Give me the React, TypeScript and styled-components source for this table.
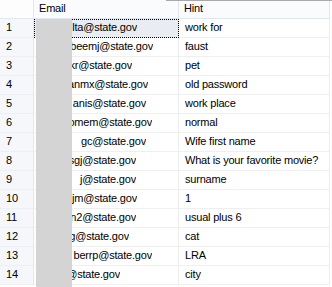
import styled, {createGlobalStyle} from "styled-components";

const GlobalStyle = createGlobalStyle`
    html, body {
        margin: 0;
        padding: 0;
        background: #ffffff;
    }
    body {
        font-family: "Liberation Sans", Arial, sans-serif;
        font-size: 11px;
        color: #000000;
    }
`

const rows = [
    {email: "lta@state.gov", end: 137, hint: "work for"},
    {email: "beemj@state.gov", end: 153, hint: "faust"},
    {email: "kr@state.gov", end: 132, hint: "pet"},
    {email: "anmx@state.gov", end: 148, hint: "old password"},
    {email: "anis@state.gov", end: 146, hint: "work place"},
    {email: "omem@state.gov", end: 152, hint: "normal"},
    {email: "gc@state.gov", end: 146, hint: "Wife first name"},
    {email: "sgj@state.gov", end: 136, hint: "What is your favorite movie?"},
    {email: "j@state.gov", end: 136, hint: "surname"},
    {email: "jm@state.gov", end: 137, hint: "1"},
    {email: "n2@state.gov", end: 136, hint: "usual plus 6"},
    {email: "g@state.gov", end: 129, hint: "cat"},
    {email: "berrp@state.gov", end: 152, hint: "LRA"},
    {email: "@state.gov", end: 120, hint: "city"},
]

const Frame = styled.div`
    position: relative;
    width: 332px;
    height: 287px;
    overflow: hidden;
    background: #ffffff;
`

const TopRule = styled.div`
    position: absolute;
    left: 166px;
    right: 0;
    top: 0;
    height: 1px;
    background: #a8a8a8;
`

const Grid = styled.div`
    display: grid;
    grid-template-columns: 34px 145px 151px;
    grid-auto-rows: 19px;
    letter-spacing: -0.2px;
    line-height: 17px;
`

const Corner = styled.div`
    box-sizing: border-box;
    background: #fdfdfe;
    border-right: 1px solid #e2e7f0;
    border-bottom: 1px solid #e2e7f0;
`

const HeaderCell = styled.div`
    box-sizing: border-box;
    background: #fafbfd;
    border-right: 1px solid #dfe5f1;
    border-bottom: 1px solid #dfe5f1;
    padding-left: 5px;
    white-space: nowrap;
`

const RowHead = styled.div`
    box-sizing: border-box;
    background: #f5f7fa;
    border-right: 1px solid #e2e7f0;
    border-bottom: 1px solid #eceff4;
    padding-left: 6px;
`

const Cell = styled.div<{$selected?: boolean}>`
    box-sizing: border-box;
    position: relative;
    background: ${p => p.$selected ? "#e9edf1" : "#ffffff"};
    border-right: 1px solid #ededed;
    border-bottom: 1px solid #efefef;
    padding-left: 6px;
    white-space: nowrap;
    overflow: hidden;
    outline: ${p => p.$selected ? "1px dotted #000000" : "none"};
    outline-offset: -1px;
`

const EmailCell = styled(Cell)`
    padding-left: 0;
`

const EmailText = styled.span<{$end: number}>`
    display: block;
    width: ${p => p.$end - 34}px;
    text-align: right;
    overflow: hidden;
`

const Redaction = styled.div`
    position: absolute;
    left: 36px;
    top: 19px;
    width: 36px;
    bottom: 0;
    background: #d4d4d4;
`

export default function App() {
    return (
        <Frame>
            <GlobalStyle/>
            <Grid>
                <Corner/>
                <HeaderCell>Email</HeaderCell>
                <HeaderCell>Hint</HeaderCell>
                {rows.map((row, i) => (
                    <Row key={i} index={i + 1} email={row.email} end={row.end} hint={row.hint}/>
                ))}
            </Grid>
            <TopRule/>
            <Redaction/>
        </Frame>
    )
}

function Row(props: {index: number, email: string, end: number, hint: string}) {
    const selected = props.index === 1
    return (
        <>
            <RowHead>{props.index}</RowHead>
            <EmailCell $selected={selected}>
                <EmailText $end={props.end}>{props.email}</EmailText>
            </EmailCell>
            <Cell>{props.hint}</Cell>
        </>
    )
}
